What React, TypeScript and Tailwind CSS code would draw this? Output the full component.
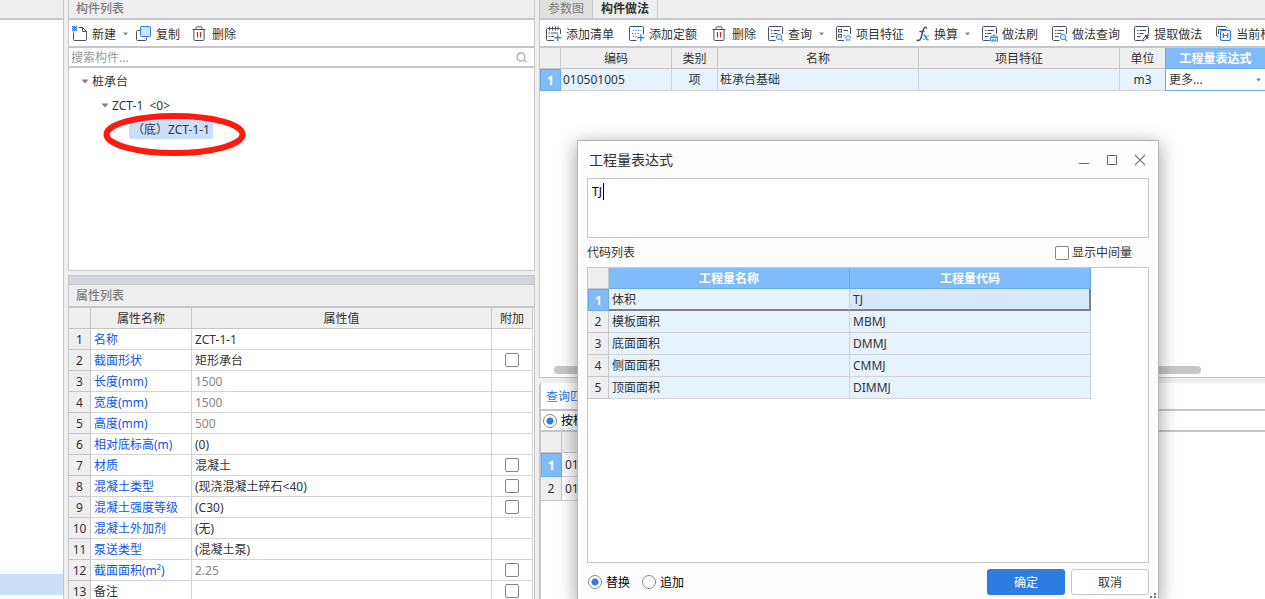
import { useState } from 'react'
import type { ReactNode } from 'react'

type Property = {
  name: string
  value: string
  muted?: boolean
  plain?: boolean
  check?: boolean
}

const PROPERTIES: Property[] = [
  { name: '名称', value: 'ZCT-1-1' },
  { name: '截面形状', value: '矩形承台', check: true },
  { name: '长度(mm)', value: '1500', muted: true },
  { name: '宽度(mm)', value: '1500', muted: true },
  { name: '高度(mm)', value: '500', muted: true },
  { name: '相对底标高(m)', value: '(0)' },
  { name: '材质', value: '混凝土', check: true },
  { name: '混凝土类型', value: '(现浇混凝土碎石<40)', check: true },
  { name: '混凝土强度等级', value: '(C30)', check: true },
  { name: '混凝土外加剂', value: '(无)' },
  { name: '泵送类型', value: '(混凝土泵)' },
  { name: '截面面积(m²)', value: '2.25', muted: true, check: true },
  { name: '备注', value: '', plain: true, check: true },
]

const CODES = [
  { name: '体积', code: 'TJ' },
  { name: '模板面积', code: 'MBMJ' },
  { name: '底面面积', code: 'DMMJ' },
  { name: '侧面面积', code: 'CMMJ' },
  { name: '顶面面积', code: 'DIMMJ' },
]

const CHECKBOX = 'block size-[14px] shrink-0 appearance-none rounded-xs border border-[#868686] bg-white checked:bg-[#2b7de0]'
const RADIO =
  'block size-[14px] shrink-0 appearance-none rounded-full border border-[#868686] bg-white checked:bg-[radial-gradient(circle,#2b7de0_3px,transparent_4px)]'
const HEAD = 'border-r border-b border-[#c6c6c6] bg-[#efefef] p-0 font-normal'
const NUM = 'border-r border-b border-[#c6c6c6] bg-[#efefef] p-0 text-center font-normal'
const NUM_ACTIVE = 'border border-[#69a8ea] bg-[#80bbfa] p-0 text-center font-bold text-white'
const CELL = 'border-r border-b border-[#d3d3d3] py-0 pr-0 pl-[3px]'

/* ---------- 图标 ---------- */

function Icon({ children, width = 16 }: { children: ReactNode; width?: number }) {
  return (
    <svg
      width={width}
      height="16"
      viewBox={`0 0 ${width} 16`}
      fill="none"
      stroke="#4b5163"
      strokeWidth="1"
      className="shrink-0"
      aria-hidden="true"
    >
      {children}
    </svg>
  )
}

function NewIcon() {
  return (
    <Icon>
      <path d="M6.5 1.5h4l4 4v8.2q0 .8-.8.8H2.3q-.8 0-.8-.8V6.5M10.5 1.5v4h4" />
      <path
        d="M0 0h1v1H0zM2 0h1v1H2zM4 0h1v1H4zM1 1h1v1H1zM3 1h1v1H3zM0 2h1v1H0zM2 2h1v1H2zM4 2h1v1H4zM1 3h1v1H1zM3 3h1v1H3zM0 4h1v1H0zM2 4h1v1H2zM4 4h1v1H4z"
        fill="#1f6fd6"
        stroke="#1f6fd6"
        strokeWidth=".3"
      />
    </Icon>
  )
}

function CopyIcon() {
  return (
    <Icon>
      <path d="M4.5 4.5H1.7Q.5 4.5.5 5.7v7.6q0 1.2 1.2 1.2h7.6q1.2 0 1.2-1.2v-1.8" />
      <rect x="4.5" y=".5" width="10" height="10" rx="1" fill="#cfe2fb" stroke="#2b78e4" />
    </Icon>
  )
}

function TrashIcon() {
  return (
    <Icon>
      <path d="M.5 3.5h13M4 3.5V2Q4 .8 5.2.8h3.6Q10 .8 10 2v1.5M1.9 3.5v9.8q0 1.2 1.2 1.2h7.8q1.2 0 1.2-1.2V3.5" />
      <path d="M5.5 6v5.5M8.5 6v5.5" stroke="#d3262e" strokeWidth="1.2" />
    </Icon>
  )
}

function AddListIcon() {
  return (
    <Icon>
      <path d="M8 14.5H1.5q-1 0-1-1V3.5q0-1 1-1h12q1 0 1 1V8" />
      <path d="M3.5.5v4M6.5.5v4M9.5.5v4M12 .5v4" />
      <path d="M2.5 7h1.5M5 7h7M2.5 10.5h1.5M5 10.5h3" />
      <path d="M11.8 8.2v7M8.3 11.7h7" stroke="#2b78e4" strokeWidth="1.2" />
    </Icon>
  )
}

function AddQuotaIcon() {
  return (
    <Icon>
      <path d="M7.5 14.5H1.7Q.5 14.5.5 13.3V1.7Q.5.5 1.7.5h11.6q1.2 0 1.2 1.2v6.8" />
      <path d="M6.5 4.5h1.2M9 4.5h1.2M11.5 4.5h1M4 4.5h1.2M3 7.5h1.2M5.8 7.5H7M8.5 7.5h1.2M3.8 10.5H5M6.5 10.5h1.2" stroke="#2b78e4" strokeWidth="1.2" />
      <path d="M11.8 8.2v7M8.3 11.7h7" stroke="#2b78e4" strokeWidth="1.2" />
    </Icon>
  )
}

function SheetLines() {
  return (
    <>
      <path d="M7.5 14.5H1.7Q.5 14.5.5 13.3V1.7Q.5.5 1.7.5h11.6q1.2 0 1.2 1.2v6.3" />
      <path d="M3 4.5h1.5M5.5 4.5H12M3 7.5h1.5M5.5 7.5h4M3 10.5h3.5" />
    </>
  )
}

function SearchSheetIcon() {
  return (
    <Icon>
      <SheetLines />
      <circle cx="11" cy="11" r="2.7" fill="#d6e7fc" stroke="#4a8fe8" />
      <path d="M13 13l2.2 2.2" stroke="#4a8fe8" strokeWidth="1.2" />
    </Icon>
  )
}

function FeatureIcon() {
  return (
    <Icon>
      <path d="M8 14.5H1.7Q.5 14.5.5 13.3V1.7Q.5.5 1.7.5h11.6q1.2 0 1.2 1.2V8" />
      <rect x="2.5" y="3.5" width="3" height="2.5" />
      <rect x="2.5" y="8.5" width="3" height="2.5" />
      <path d="M7.5 4.5H12M7.5 9.5h1.2" />
      <path
        d="M12 8.8l1 1.9 2.1.3-1.5 1.5.3 2.1-1.9-1-1.9 1 .3-2.1L8.9 11l2.1-.3z"
        fill="#e3effd"
        stroke="#6aa6f0"
      />
    </Icon>
  )
}

function FormulaIcon() {
  return (
    <svg width="14" height="16" viewBox="0 0 14 16" className="shrink-0" fill="none" aria-hidden="true">
      <path d="M10.8 2.6Q9.6.2 7.9 2.4 6.8 4.2 5.8 9T3.2 14.2Q1.8 15.2.6 13.8M3.4 5.5h5.2" stroke="#4b5163" strokeWidth="1.5" />
      <path d="M7.6 9.3q1.6-.5 2.3 2.2t2.7 2" stroke="#4a8fe8" strokeWidth="1.8" />
      <path d="M12.8 9.4q-1.2-.4-2.7 2t-2.9 2.2" stroke="#4a8fe8" strokeWidth="1" />
    </svg>
  )
}

function BrushIcon() {
  return (
    <Icon>
      <SheetLines />
      <path
        d="M8.5 11.5h7v3.5h-7zM8.5 11.5q0-1.5 1.5-1.5h4q1.5 0 1.5 1.5M12 10V8M10.8 12.8V15M13.2 12.8V15"
        fill="#e3effd"
        stroke="#3a84e6"
      />
    </Icon>
  )
}

function ExtractIcon() {
  return (
    <Icon>
      <SheetLines />
      <path d="M8.4 15l.5-1.8 3-3 1.3 1.3-3 3z" fill="#fff" />
      <path d="M11 9.4l3 3M12.5 10.9l2-2.2" strokeWidth="2" />
    </Icon>
  )
}

function CurrentIcon() {
  return (
    <Icon>
      <path d="M2 10.5h-.3Q.5 10.5.5 9.3V1.7Q.5.5 1.7.5h7.6q1.2 0 1.2 1.2V2" />
      <path d="M2.5 8V3.5h8" />
      <rect x="4.5" y="4.5" width="10" height="10" rx="1.5" fill="#fff" stroke="#2b78e4" strokeWidth="1.2" />
      <path d="M7.3 7v5M11.7 7v5M7.3 9.5h4.4" stroke="#2b78e4" strokeWidth="1.2" />
    </Icon>
  )
}

function Caret({ className = '' }: { className?: string }) {
  return (
    <svg width="5" height="4" viewBox="0 0 5 4" className={`shrink-0 ${className}`} aria-hidden="true">
      <path d="M0 .5h5L2.5 3.5z" fill="#858585" />
    </svg>
  )
}

/* ---------- 通用部件 ---------- */

function ToolButton({ icon, label, menu }: { icon: ReactNode; label: string; menu?: boolean }) {
  return (
    <button type="button" className="flex shrink-0 items-center gap-1 whitespace-nowrap">
      {icon}
      <span>{label}</span>
      {menu && <Caret className="ml-[3px]" />}
    </button>
  )
}

function TreeArrow() {
  return (
    <svg width="8" height="5" viewBox="0 0 8 5" className="shrink-0" aria-hidden="true">
      <path d="M.5.5h7L4 4.5z" fill="#808080" />
    </svg>
  )
}

/* ---------- 构件列表 ---------- */

function ComponentList() {
  return (
    <section className="border-x border-b border-[#c8c8cb] bg-white">
      <h2 className="h-5 border-b-2 border-[#c5c6cc] bg-[#eeeeee] pl-[7px] font-medium text-[#7d7d7d]">构件列表</h2>
      <div className="flex h-7 items-center gap-2 border-b-2 border-[#c5c6cc] pt-[2px] pl-[3px]">
        <ToolButton icon={<NewIcon />} label="新建" menu />
        <div className="flex gap-3">
          <ToolButton icon={<CopyIcon />} label="复制" />
          <ToolButton icon={<TrashIcon />} label="删除" />
        </div>
      </div>
      <div className="flex h-5 items-center border-b-2 border-[#c8c8cb] pr-[7px]">
        <input
          type="text"
          aria-label="搜索构件"
          placeholder="搜索构件..."
          className="h-[18px] min-w-0 flex-1 pl-[2px] outline-none placeholder:text-[#999999]"
        />
        <svg width="11" height="11" viewBox="0 0 11 11" fill="none" stroke="#aaaaaa" strokeWidth="1.3" aria-hidden="true">
          <circle cx="5" cy="5" r="4" />
          <path d="M8 8l2.4 2.4" />
        </svg>
      </div>
      <ul className="relative h-[202px] pt-px">
        <li className="flex h-6 items-center gap-[3px] pl-3">
          <TreeArrow />
          桩承台
        </li>
        <li className="flex h-6 items-center gap-[3px] pl-8 whitespace-pre">
          <TreeArrow />
          {'ZCT-1  <0>'}
        </li>
        <li className="flex h-6 items-center pl-[60px]">
          <span className="rounded-xs bg-[#c9dffa] px-[3px] py-px">（底）ZCT-1-1</span>
        </li>
        {/* 红圈标注 */}
        <svg width="144" height="44" viewBox="0 0 144 44" className="absolute top-11 left-[34px]" aria-hidden="true">
          <ellipse cx="71.5" cy="22.5" rx="68" ry="18.5" fill="none" stroke="#ff1a0f" strokeWidth="6" />
        </svg>
      </ul>
    </section>
  )
}

/* ---------- 属性列表 ---------- */

function PropertyList() {
  return (
    <section className="border-x border-[#c8c8cb] bg-white">
      <div className="h-[10px] border-y border-[#c5c6cc] bg-[#d3d5db]" />
      <h2 className="flex h-[23px] items-center border-b-2 border-[#c5c6cc] bg-[#eeeeee] pl-[7px] font-medium text-[#7d7d7d]">
        属性列表
      </h2>
      <div className="pr-px">
        <table className="w-full table-fixed border-separate border-spacing-0">
          <colgroup>
            <col className="w-[22px]" />
            <col className="w-[101px]" />
            <col />
            <col className="w-[41px]" />
          </colgroup>
          <thead>
            <tr className="h-[21px]">
              <th className={HEAD} />
              <th className={HEAD}>属性名称</th>
              <th className={HEAD}>属性值</th>
              <th className={HEAD}>附加</th>
            </tr>
          </thead>
          <tbody>
            {PROPERTIES.map((p, i) => (
              <tr key={p.name} className="h-[21px]">
                <th className={NUM}>{i + 1}</th>
                <td className={`${CELL} ${p.plain ? '' : 'text-[#0f55ee]'}`}>{p.name}</td>
                <td className={`${CELL} ${p.muted ? 'text-[#868686]' : ''}`}>{p.value}</td>
                <td className="border-r border-b border-[#d3d3d3] p-0">
                  {p.check && <input type="checkbox" aria-label={`附加 ${p.name}`} className={`mx-auto ${CHECKBOX}`} />}
                </td>
              </tr>
            ))}
          </tbody>
        </table>
      </div>
    </section>
  )
}

/* ---------- 构件做法 ---------- */

function MethodPanel() {
  return (
    <section className="h-[378px] overflow-hidden border-b border-l border-[#c5c6cc] bg-white">
      <div className="flex h-5 border-b-2 border-[#c5c6cc] bg-[#eeeeee]">
        <button type="button" className="flex w-[53px] justify-center border-r border-[#c8c8c8] bg-[#e0e0e0] text-[#7d7d7d]">
          参数图
        </button>
        <button type="button" className="flex w-[65px] justify-center border-r border-[#c8c8c8] font-bold">
          构件做法
        </button>
      </div>
      <div className="flex h-7 items-center gap-3 overflow-hidden border-b-2 border-[#c5c6cc] pt-[2px] pl-[6px]">
        <div className="flex shrink-0 gap-[15px]">
          <ToolButton icon={<AddListIcon />} label="添加清单" />
          <ToolButton icon={<AddQuotaIcon />} label="添加定额" />
          <ToolButton icon={<TrashIcon />} label="删除" />
        </div>
        <ToolButton icon={<SearchSheetIcon />} label="查询" menu />
        <ToolButton icon={<FeatureIcon />} label="项目特征" />
        <ToolButton icon={<FormulaIcon />} label="换算" menu />
        <div className="flex shrink-0 gap-[14px]">
          <ToolButton icon={<BrushIcon />} label="做法刷" />
          <ToolButton icon={<SearchSheetIcon />} label="做法查询" />
          <ToolButton icon={<ExtractIcon />} label="提取做法" />
          <ToolButton icon={<CurrentIcon />} label="当前构件" />
        </div>
      </div>
      <table className="w-full table-fixed border-separate border-spacing-0">
        <colgroup>
          <col className="w-[21px]" />
          <col className="w-[111px]" />
          <col className="w-[46px]" />
          <col className="w-[201px]" />
          <col className="w-[201px]" />
          <col className="w-[45px]" />
          <col />
        </colgroup>
        <thead>
          <tr className="h-[21px]">
            <th className={HEAD} />
            <th className={HEAD}>编码</th>
            <th className={HEAD}>类别</th>
            <th className={HEAD}>名称</th>
            <th className={HEAD}>项目特征</th>
            <th className="border-b border-[#c6c6c6] bg-[#efefef] p-0 font-normal">单位</th>
            <th className="border-b border-l border-[#69a8ea] bg-[#80bbfa] p-0 font-bold text-white">工程量表达式</th>
          </tr>
        </thead>
        <tbody>
          <tr className="h-[22px] bg-[#e6f3ff]">
            <th className={NUM_ACTIVE}>1</th>
            <td className="border-r border-b border-[#d3d3d3] py-0 pr-0 pl-[2px]">010501005</td>
            <td className="border-r border-b border-[#d3d3d3] p-0 text-center">项</td>
            <td className="border-r border-b border-[#d3d3d3] py-0 pr-0 pl-[2px]">桩承台基础</td>
            <td className={CELL} />
            <td className="border-b border-[#d3d3d3] p-0 text-center">m3</td>
            <td className="border-b border-l border-[#69a8ea] bg-white p-0">
              <div className="flex items-center pr-1">
                <select aria-label="工程量表达式" className="h-5 min-w-0 flex-1 appearance-none pl-[3px] outline-none">
                  <option>更多...</option>
                </select>
                <Caret />
              </div>
            </td>
          </tr>
        </tbody>
      </table>
      {/* 横向滚动条 */}
      <div className="flex h-[283px] items-end pr-16 pl-[14px]">
        <div className="h-2 w-full rounded-full bg-[#c8c8c8]" />
      </div>
    </section>
  )
}

function QueryPanel() {
  return (
    <section className="mt-[5px] flex-1 rounded-tl-sm border-l-2 border-[#c5c6cc] bg-white">
      <div className="flex h-7 items-center border-b-2 border-[#c5c6cc] pl-[5px]">
        <button type="button" className="text-[#2b7de0]">
          查询匹配
        </button>
      </div>
      <div className="flex h-[21px] items-center border-b-2 border-[#c5c6cc] pl-[2px]">
        <label className="flex items-center gap-1 text-black">
          <input type="radio" name="filter" defaultChecked className={RADIO} />
          按构件
        </label>
      </div>
      <table className="w-full table-fixed border-separate border-spacing-0">
        <colgroup>
          <col className="w-[21px]" />
          <col className="w-[111px]" />
          <col />
        </colgroup>
        <thead>
          <tr className="h-[21px]">
            <th className={HEAD} />
            <th className={HEAD} />
            <th className="p-0" />
          </tr>
        </thead>
        <tbody>
          <tr className="h-6">
            <th className={NUM_ACTIVE}>1</th>
            <td className={CELL}>010501</td>
            <td className="p-0" />
          </tr>
          <tr className="h-6">
            <th className={NUM}>2</th>
            <td className={CELL}>010501</td>
            <td className="p-0" />
          </tr>
        </tbody>
      </table>
    </section>
  )
}

/* ---------- 工程量表达式窗口 ---------- */

function ExpressionDialog() {
  const [expression, setExpression] = useState('TJ')
  const [mode, setMode] = useState('replace')

  return (
    <div
      role="dialog"
      aria-label="工程量表达式"
      className="absolute top-[140px] left-[577px] w-[582px] border border-[#b5b5b5] bg-[#fdfdfd] px-[9px] shadow-[0_4px_18px_rgba(0,0,0,0.4)]"
    >
      <div className="flex h-[37px] items-center justify-between pr-[3px] pl-[2px]">
        <h1 className="text-sm text-[#333333]">工程量表达式</h1>
        <div className="flex items-center gap-4">
          <button type="button" aria-label="最小化">
            <svg width="12" height="12" viewBox="0 0 12 12" stroke="#666666" aria-hidden="true">
              <path d="M1 9.5h10" />
            </svg>
          </button>
          <button type="button" aria-label="最大化">
            <svg width="12" height="12" viewBox="0 0 12 12" fill="none" stroke="#666666" aria-hidden="true">
              <path d="M1.5 1.5h9v9h-9z" />
            </svg>
          </button>
          <button type="button" aria-label="关闭">
            <svg width="12" height="12" viewBox="0 0 12 12" stroke="#777777" strokeWidth="1.1" aria-hidden="true">
              <path d="M1 1l10 10M11 1L1 11" />
            </svg>
          </button>
        </div>
      </div>

      <div className="relative">
        <textarea
          aria-label="表达式"
          spellCheck={false}
          value={expression}
          onChange={(e) => setExpression(e.target.value)}
          className="block h-[60px] w-full resize-none border border-[#c6c6c6] bg-white p-1 text-black outline-none"
        />
        {/* 光标 */}
        <span className="absolute top-[5px] left-4 h-[17px] w-px bg-black" />
      </div>

      <div className="flex h-[29px] items-center justify-between pr-[17px]">
        <span>代码列表</span>
        <label className="flex items-center gap-[3px]">
          <input type="checkbox" className={CHECKBOX} />
          显示中间量
        </label>
      </div>

      <div className="h-[296px] border border-[#c6c6c6] bg-white">
        <table className="w-[503px] table-fixed border-separate border-spacing-0">
          <colgroup>
            <col className="w-[21px]" />
            <col className="w-[241px]" />
            <col className="w-[241px]" />
          </colgroup>
          <thead>
            <tr className="h-[21px]">
              <th className={HEAD} />
              <th className="border-r border-b border-[#69a8ea] bg-[#80bbfa] p-0 font-bold text-white">工程量名称</th>
              <th className="border-r border-b border-[#69a8ea] bg-[#80bbfa] p-0 font-bold text-white">工程量代码</th>
            </tr>
          </thead>
          <tbody>
            {CODES.map((row, i) =>
              i === 0 ? (
                <tr key={row.code} className="h-[22px]">
                  <th className={NUM_ACTIVE}>{i + 1}</th>
                  <td className="border-r border-b-2 border-r-[#d3d3d3] border-b-[#7f8184] bg-[#e6f3ff] py-0 pr-0 pl-[3px]">{row.name}</td>
                  <td className="border-r-2 border-b-2 border-[#7f8184] bg-[#d5e9ff] py-0 pr-0 pl-[3px]">{row.code}</td>
                </tr>
              ) : (
                <tr key={row.code} className="h-[22px] bg-[#e6f3ff]">
                  <th className={NUM}>{i + 1}</th>
                  <td className={CELL}>{row.name}</td>
                  <td className={CELL}>{row.code}</td>
                </tr>
              )
            )}
          </tbody>
        </table>
      </div>

      <div className="flex h-[38px] items-center justify-between pl-px">
        <div className="flex items-center gap-3 text-black">
          <label className="flex items-center gap-1">
            <input type="radio" name="mode" checked={mode === 'replace'} onChange={() => setMode('replace')} className={RADIO} />
            替换
          </label>
          <label className="flex items-center gap-1">
            <input type="radio" name="mode" checked={mode === 'append'} onChange={() => setMode('append')} className={RADIO} />
            追加
          </label>
        </div>
        <div className="flex gap-[6px]">
          <button type="button" className="h-[26px] w-[78px] rounded-[3px] bg-[#2b7de0] text-white">
            确定
          </button>
          <button type="button" className="h-[26px] w-[78px] rounded-[3px] border border-[#c6c6c6] bg-white">
            取消
          </button>
        </div>
      </div>
      {/* 缩放手柄 */}
      <svg width="6" height="6" viewBox="0 0 6 6" className="absolute right-[2px] bottom-[2px]" fill="#777777" aria-hidden="true">
        <path d="M4 0h2v2H4zM0 3h2v2H0zM4 3h2v2H4z" />
      </svg>
    </div>
  )
}

export default function App() {
  return (
    <div className="relative flex h-screen gap-1 overflow-hidden bg-[#efefef] font-['Noto_Sans','Noto_Sans_CJK_SC',sans-serif] text-xs leading-[17px] text-[#333333]">
      <aside className="flex w-16 shrink-0 flex-col border-r border-[#c8c8cb] bg-white">
        <div className="h-5 border-b-2 border-[#c5c6cc] bg-[#eeeeee]" />
        <div className="mt-auto mb-1 h-[21px] bg-[#c9dffa]" />
      </aside>
      <div className="flex w-[467px] shrink-0 flex-col gap-1">
        <ComponentList />
        <PropertyList />
      </div>
      <main className="flex min-w-0 flex-1 flex-col">
        <MethodPanel />
        <QueryPanel />
      </main>
      <ExpressionDialog />
    </div>
  )
}
